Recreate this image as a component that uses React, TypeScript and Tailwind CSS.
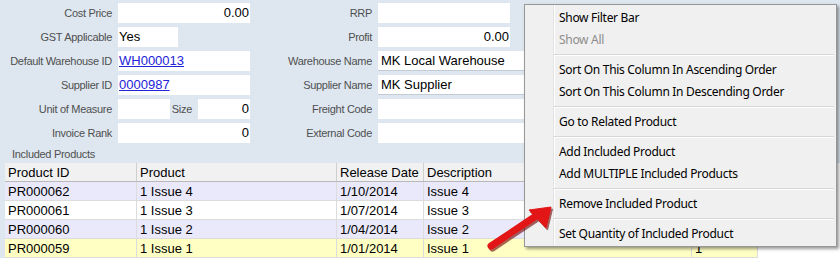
import { ReactNode } from "react";

const labelCls =
  "text-[11px] text-[#4f4f4f] text-right tracking-[-0.3px] leading-none pr-[6px]";

function Row(props: { label: string; lw: string; children: ReactNode }) {
  return (
    <div className="flex items-center h-[20px]">
      <div className={`${labelCls} ${props.lw}`}>{props.label}</div>
      {props.children}
    </div>
  );
}

function Box(props: { w: string; children?: ReactNode; right?: boolean; line?: boolean }) {
  return (
    <div
      className={`h-[20px] bg-white flex items-center px-[1px] text-[13px] text-black ${props.w} ${
        props.right ? "justify-end" : ""
      } ${props.line ? "border-b border-[#c3ccd6]" : ""}`}
    >
      {props.children}
    </div>
  );
}

const cols = [
  { name: "Product ID", w: "w-[132px]" },
  { name: "Product", w: "w-[200px]" },
  { name: "Release Date", w: "w-[87px]" },
  { name: "Description", w: "w-[268px]" },
  { name: "", w: "w-[66px]" },
];

const rows = [
  { id: "PR000062", p: "1 Issue 4", d: "1/10/2014", desc: "Issue 4", q: "1", bg: "bg-[#e9e9fb]" },
  { id: "PR000061", p: "1 Issue 3", d: "1/07/2014", desc: "Issue 3", q: "1", bg: "bg-white" },
  { id: "PR000060", p: "1 Issue 2", d: "1/04/2014", desc: "Issue 2", q: "1", bg: "bg-[#e9e9fb]" },
  { id: "PR000059", p: "1 Issue 1", d: "1/01/2014", desc: "Issue 1", q: "1", bg: "bg-[#ffffc4]" },
];

type MenuEntry = { t: string; dim?: boolean } | "sep";

const menu: MenuEntry[] = [
  { t: "Show Filter Bar" },
  { t: "Show All", dim: true },
  "sep",
  { t: "Sort On This Column In Ascending Order" },
  { t: "Sort On This Column In Descending Order" },
  "sep",
  { t: "Go to Related Product" },
  "sep",
  { t: "Add Included Product" },
  { t: "Add MULTIPLE Included Products" },
  "sep",
  { t: "Remove Included Product" },
  "sep",
  { t: "Set Quantity of Included Product" },
];

export default function App() {
  return (
    <div className="relative w-[840px] h-[262px] overflow-hidden bg-white font-['Liberation_Sans',Arial,sans-serif]">
      {/* form */}
      <div className="h-[163px] bg-[#dee7f0] flex pt-[3px]">
        <div className="w-[258px] flex flex-col gap-[4px]">
          <Row label="Cost Price" lw="w-[118px]">
            <Box w="w-[132px]" right>0.00</Box>
          </Row>
          <Row label="GST Applicable" lw="w-[118px]">
            <Box w="w-[60px]">Yes</Box>
          </Row>
          <Row label="Default Warehouse ID" lw="w-[118px]">
            <Box w="w-[132px]">
              <span className="text-[#2323d8] underline">WH000013</span>
            </Box>
          </Row>
          <Row label="Supplier ID" lw="w-[118px]">
            <Box w="w-[132px]">
              <span className="text-[#2323d8] underline">0000987</span>
            </Box>
          </Row>
          <Row label="Unit of Measure" lw="w-[118px]">
            <Box w="w-[52px]" />
            <div className={`${labelCls} w-[28px]`}>Size</div>
            <Box w="w-[52px]" right>0</Box>
          </Row>
          <Row label="Invoice Rank" lw="w-[118px]">
            <Box w="w-[132px]" right>0</Box>
          </Row>
        </div>
        <div className="flex flex-col gap-[4px]">
          <Row label="RRP" lw="w-[120px]">
            <Box w="w-[132px]" />
          </Row>
          <Row label="Profit" lw="w-[120px]">
            <Box w="w-[132px]" right>0.00</Box>
          </Row>
          <Row label="Warehouse Name" lw="w-[120px]">
            <Box w="w-[260px]" line>
              <span className="pl-[2px]">MK Local Warehouse</span>
            </Box>
          </Row>
          <Row label="Supplier Name" lw="w-[120px]">
            <Box w="w-[260px]" line>
              <span className="pl-[2px]">MK Supplier</span>
            </Box>
          </Row>
          <Row label="Freight Code" lw="w-[120px]">
            <Box w="w-[260px]" />
          </Row>
          <Row label="External Code" lw="w-[120px]">
            <Box w="w-[260px]" />
          </Row>
          <div className="text-[11px] text-[#4f4f4f] tracking-[-0.3px] -ml-[246px] mt-[2px] leading-none">
            Included Products
          </div>
        </div>
      </div>

      {/* table */}
      <div className="flex">
        <div className="w-[5px] h-[95px] bg-[#dee7f0]" />
        <div className="flex flex-col text-[13px] text-black">
          <div className="flex h-[19px] bg-[#f1f1f1] border-b border-[#b9b9b9]">
            {cols.map((c, i) => (
              <div
                key={i}
                className={`${c.w} px-[3px] flex items-center border-r border-[#cfcfcf] leading-none`}
              >
                {c.name}
              </div>
            ))}
          </div>
          {rows.map((r) => (
            <div key={r.id} className={`flex h-[19px] border-b border-[#dcdcdc] ${r.bg}`}>
              {[r.id, r.p, r.d, r.desc, r.q].map((v, i) => (
                <div
                  key={i}
                  className={`${cols[i].w} px-[3px] flex items-center border-r border-[#dcdcdc] leading-none`}
                >
                  {v}
                </div>
              ))}
            </div>
          ))}
        </div>
      </div>

      {/* context menu */}
      <div className="absolute left-[524px] top-[4px] w-[313px] h-[243px] bg-[#f0f0f0] border border-[#979797] shadow-[2px_2px_3px_rgba(0,0,0,0.4)] font-['Noto_Sans',sans-serif] text-[12px] tracking-[-0.3px]">
        <div className="absolute left-[28px] top-0 bottom-0 w-[2px] border-l border-[#e2e2e2] bg-white" />
        <div className="relative flex flex-col pt-[2px]">
          {menu.map((m, i) =>
            m === "sep" ? (
              <div key={i} className="h-[8px] flex items-center pl-[29px] pr-[2px]">
                <div className="w-full h-[2px] border-t border-[#d7d7d7] bg-white" />
              </div>
            ) : (
              <div
                key={i}
                className={`h-[22px] flex items-center pl-[34px] ${m.dim ? "text-[#8d8d8d]" : "text-black"}`}
              >
                {m.t}
              </div>
            )
          )}
        </div>
      </div>

      {/* arrow */}
      <svg className="absolute left-0 top-0 w-[840px] h-[262px] pointer-events-none" viewBox="0 0 840 262">
        <g transform="translate(1.5,2)" fill="#6b0000" stroke="#6b0000" opacity="0.6">
          <line x1="491" y1="246" x2="536" y2="216" strokeWidth="7" strokeLinecap="round" />
          <polygon points="551,207 529,210 546,228" strokeWidth="1" />
        </g>
        <g fill="#e21616" stroke="#e21616">
          <line x1="491" y1="246" x2="536" y2="216" strokeWidth="7" strokeLinecap="round" />
          <polygon points="551,207 529,210 546,228" strokeWidth="1" strokeLinejoin="round" />
        </g>
      </svg>
    </div>
  );
}
